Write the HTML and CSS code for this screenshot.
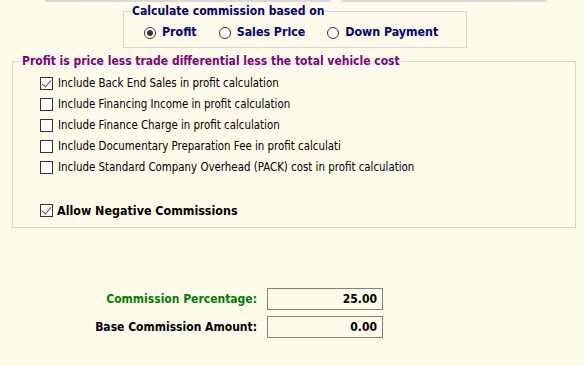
FILE: index.html
```html
<!DOCTYPE html>
<html lang="en">
<head>
    <meta charset="UTF-8">
    <title>Commission Settings</title>
    <link rel="stylesheet" href="styles.css">
</head>
<body>
    <div id="tabline">
        <span class="seg seg-a"></span>
        <span class="seg seg-b"></span>
    </div>

    <fieldset id="basis">
        <legend>Calculate commission based on</legend>
        <div class="radio-row">
            <label class="radio"><span class="dot on"></span>Profit</label>
            <label class="radio"><span class="dot"></span>Sales Price</label>
            <label class="radio"><span class="dot"></span>Down Payment</label>
        </div>
    </fieldset>

    <fieldset id="profit">
        <legend>Profit is price less trade differential less the total vehicle cost</legend>
        <div class="check-list">
            <label class="check"><span class="box checked"></span>Include Back End Sales in profit calculation</label>
            <label class="check"><span class="box"></span>Include Financing Income in profit calculation</label>
            <label class="check"><span class="box"></span>Include Finance Charge in profit calculation</label>
            <label class="check"><span class="box"></span>Include Documentary Preparation Fee in profit calculati</label>
            <label class="check"><span class="box"></span>Include Standard Company Overhead (PACK) cost in profit calculation</label>
        </div>
        <label class="check big"><span class="box checked"></span>Allow Negative Commissions</label>
    </fieldset>

    <div id="amounts">
        <span class="lbl green">Commission Percentage:</span>
        <span class="field">25.00</span>
        <span class="lbl">Base Commission Amount:</span>
        <span class="field">0.00</span>
    </div>
</body>
</html>
```

FILE: styles.css
```css
* {
    margin: 0;
    padding: 0;
    box-sizing: border-box;
}

body {
    background-color: #FFFBEB;
    font-family: 'DejaVu Sans Condensed', 'DejaVu Sans', sans-serif;
    color: #000;
    width: 584px;
    height: 366px;
    overflow: hidden;
}

#tabline {
    display: flex;
    height: 2px;
}

#tabline .seg {
    display: block;
    height: 2px;
    background-color: #D9D9D9;
}

.seg-a {
    margin-left: 45px;
    width: 285px;
}

.seg-b {
    margin-left: 12px;
    width: 204px;
}

fieldset {
    border: 1px solid #D8D8D8;
}

legend {
    font-weight: bold;
    padding: 0 1px;
}

#basis {
    margin: 2px 0 0 123px;
    width: 344px;
    height: 44px;
    padding: 0 0 0 7px;
}

#basis legend {
    color: #000080;
    font-size: 12.1px;
    line-height: 15px;
}

.radio-row {
    display: flex;
    padding: 6px 0 0 13px;
    gap: 22px;
}

.radio {
    display: flex;
    align-items: center;
    gap: 6px;
    color: #000080;
    font-weight: bold;
    font-size: 12.3px;
    line-height: 15px;
}

.dot {
    width: 12px;
    height: 12px;
    border: 1px solid #333;
    border-radius: 50%;
    display: flex;
    align-items: center;
    justify-content: center;
    background-color: #fff;
}

.dot.on::after {
    content: "";
    width: 6px;
    height: 6px;
    border-radius: 50%;
    background-color: #333;
}

#profit {
    margin: 6px 0 0 12px;
    width: 564px;
    height: 174px;
    padding: 0 0 0 8px;
}

#profit legend {
    color: #800080;
    font-size: 12px;
    line-height: 15px;
}

.check-list {
    display: flex;
    flex-direction: column;
    gap: 8px;
    padding: 8px 0 0 19px;
}

.check {
    display: flex;
    align-items: center;
    gap: 5px;
    font-size: 11.4px;
    line-height: 13px;
}

.check.big {
    font-weight: bold;
    font-size: 12.4px;
    line-height: 15px;
    margin: 29px 0 0 19px;
    gap: 4px;
}

.box {
    width: 13px;
    height: 13px;
    border: 1px solid #333;
    background-color: #fff;
    position: relative;
}

.box.checked::after {
    content: "";
    position: absolute;
    left: 3px;
    top: 0px;
    width: 4px;
    height: 8px;
    border-right: 1.5px solid #555;
    border-bottom: 1.5px solid #555;
    transform: rotate(40deg);
}

#amounts {
    display: grid;
    grid-template-columns: 257px 116px;
    column-gap: 10px;
    row-gap: 6px;
    margin-top: 60px;
    align-items: center;
}

.lbl {
    text-align: right;
    font-weight: bold;
    font-size: 12px;
}

.lbl.green {
    color: #008000;
}

.field {
    height: 22px;
    border: 1px solid #808080;
    text-align: right;
    font-weight: bold;
    font-size: 12px;
    line-height: 20px;
    padding-right: 5px;
}
```
